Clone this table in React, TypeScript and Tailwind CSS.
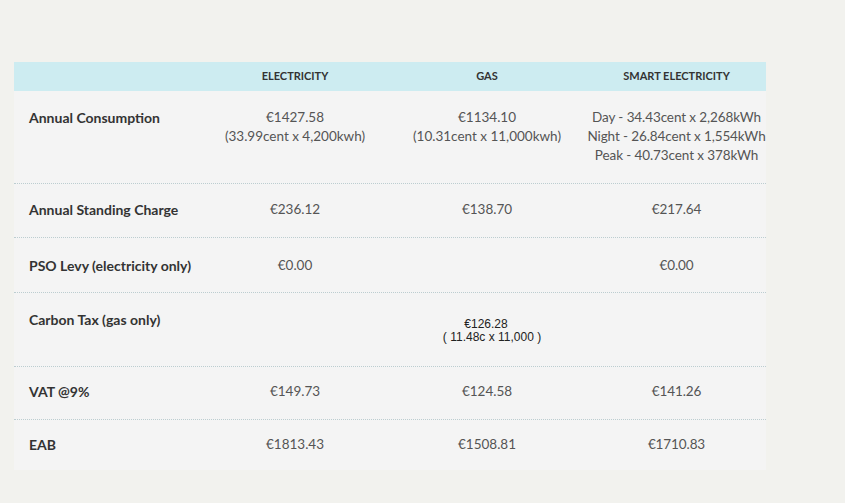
const rows = [
  {
    label: 'Annual Consumption',
    h: 'h-[93px] pt-[17px]',
    elec: ['€1427.58', '(33.99cent x 4,200kwh)'],
    gas: ['€1134.10', '(10.31cent x 11,000kwh)'],
    smart: ['Day - 34.43cent x 2,268kWh', 'Night - 26.84cent x 1,554kWh', 'Peak - 40.73cent x 378kWh'],
  },
  { label: 'Annual Standing Charge', h: 'h-[54px] pt-[16px]', elec: ['€236.12'], gas: ['€138.70'], smart: ['€217.64'] },
  { label: 'PSO Levy (electricity only)', h: 'h-[55px] pt-[18px]', elec: ['€0.00'], gas: [], smart: ['€0.00'] },
  { label: 'Carbon Tax (gas only)', h: 'h-[74px] pt-[17px]', elec: [], gas: [], smart: [], carbon: true },
  { label: 'VAT @9%', h: 'h-[53px] pt-[15px]', elec: ['€149.73'], gas: ['€124.58'], smart: ['€141.26'] },
  { label: 'EAB', h: 'h-[50px] pt-[15px]', elec: ['€1813.43'], gas: ['€1508.81'], smart: ['€1710.83'] },
];

const grid = 'grid grid-cols-[185px_192px_192px_183px]';

function Cell({ lines, shift }: { lines: string[]; shift?: boolean }) {
  return (
    <div className={`flex flex-col items-center text-[13.5px] leading-[19px] text-[#555] ${shift ? 'pl-[4px] tracking-[-0.1px]' : ''}`}>
      {lines.map((l) => (
        <span key={l} className="whitespace-nowrap">{l}</span>
      ))}
    </div>
  );
}

export default function App() {
  return (
    <div className="min-h-[503px] w-[845px] bg-[#f2f2ee] pt-[62px] pl-[14px] font-['Lato',sans-serif]">
      <div className="w-[752px] bg-[#f4f4f4]">
        <div className={`${grid} h-[29px] items-center bg-[#cdecf1] text-[11px] font-bold text-[#333]`}>
          <div />
          <div className="text-center">ELECTRICITY</div>
          <div className="text-center">GAS</div>
          <div className="pl-[4px] text-center">SMART ELECTRICITY</div>
        </div>
        {rows.map((r, i) => (
          <div
            key={r.label}
            className={`${grid} box-border ${r.h} ${i < rows.length - 1 ? 'border-b border-dotted border-[#bccdd0]' : ''}`}
          >
            <div className="pl-[15px] text-[14px] font-bold leading-[19px] text-[#333] whitespace-nowrap">{r.label}</div>
            <Cell lines={r.elec} />
            {r.carbon ? (
              <div className="flex flex-col items-center pt-[8px] pl-[10px] font-['Liberation_Sans',sans-serif] text-[12px] leading-[13px] text-[#222]">
                <span className="pr-[12px]">€126.28</span>
                <span>( 11.48c x 11,000 )</span>
              </div>
            ) : (
              <Cell lines={r.gas} />
            )}
            <Cell lines={r.smart} shift />
          </div>
        ))}
      </div>
    </div>
  );
}
